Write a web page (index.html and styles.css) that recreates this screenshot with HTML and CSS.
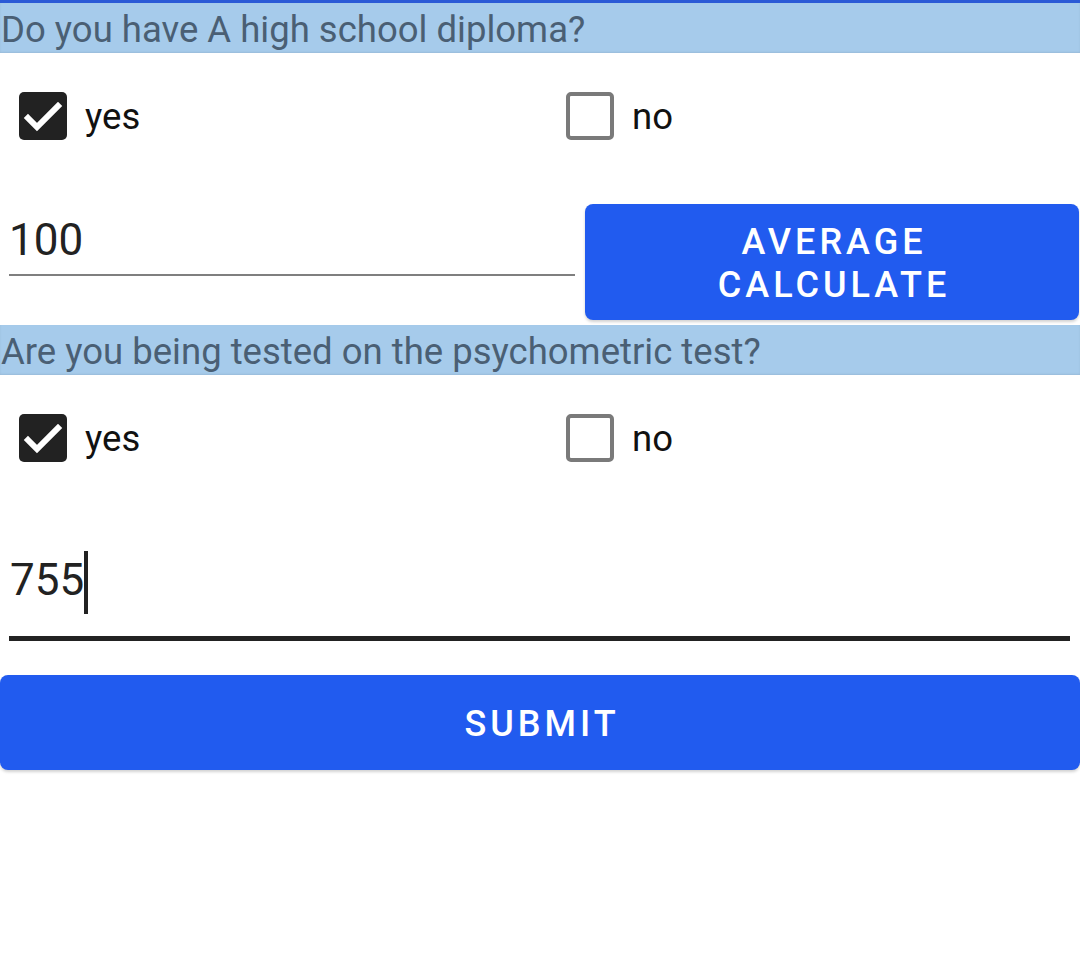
FILE: index.html
```html
<!DOCTYPE html>
<html>
<head>
<meta charset="utf-8">
<link rel="stylesheet" href="styles.css">
</head>
<body>
<div class="app">
  <div class="question">Do you have A high school diploma?</div>
  <div class="options">
    <label class="option">
      <span class="box checked"><svg viewBox="0 0 48 48" width="48" height="48"><path d="M9 26 L18 35 L39 14" fill="none" stroke="#fff" stroke-width="6" stroke-linecap="square"/></svg></span>
      <span class="label">yes</span>
    </label>
    <label class="option">
      <span class="box"></span>
      <span class="label">no</span>
    </label>
  </div>
  <div class="calc-row">
    <div class="field field-grey"><span class="value">100</span></div>
    <button class="btn btn-calc">AVERAGE<br>CALCULATE</button>
  </div>
  <div class="question">Are you being tested on the psychometric test?</div>
  <div class="options">
    <label class="option">
      <span class="box checked"><svg viewBox="0 0 48 48" width="48" height="48"><path d="M9 26 L18 35 L39 14" fill="none" stroke="#fff" stroke-width="6" stroke-linecap="square"/></svg></span>
      <span class="label">yes</span>
    </label>
    <label class="option">
      <span class="box"></span>
      <span class="label">no</span>
    </label>
  </div>
  <div class="field field-focus"><span class="value">755</span><span class="cursor"></span></div>
  <button class="btn btn-submit">SUBMIT</button>
</div>
</body>
</html>
```

FILE: styles.css
```css
* { box-sizing: border-box; }
html, body { margin: 0; padding: 0; background: #ffffff; }
body {
  font-family: Roboto, "Noto Sans", "Liberation Sans", sans-serif;
  width: 1080px;
  height: 957px;
  overflow: hidden;
}
.app {
  border-top: 3px solid #2b5ad6;
  display: flex;
  flex-direction: column;
}
.question {
  height: 50px;
  background: #a6cbeb;
  color: #4a5f74;
  font-size: 36.5px;
  line-height: 54px;
  padding-left: 1px;
  white-space: nowrap;
  overflow: hidden;
  box-shadow: 0 -1px 2px rgba(0,0,0,0.08) inset;
}
.options {
  height: 126px;
  display: grid;
  grid-template-columns: 547px 1fr;
  align-items: center;
}
.option {
  display: flex;
  align-items: center;
  padding-left: 19px;
  gap: 18px;
}
.box {
  width: 48px;
  height: 48px;
  border: 4.5px solid #7a7a7a;
  border-radius: 5px;
  display: flex;
  align-items: center;
  justify-content: center;
  flex: none;
}
.box.checked {
  background: #222222;
  border: none;
}
.label {
  font-size: 36.5px;
  color: #111111;
}
.calc-row {
  display: flex;
  align-items: flex-start;
  padding: 25px 0 5px 9px;
  gap: 10px;
}
.field {
  position: relative;
  display: flex;
  align-items: flex-end;
}
.field-grey {
  width: 566px;
  height: 72px;
  border-bottom: 2.5px solid #7f7f7f;
  padding: 0 0 10px 0;
}
.value {
  font-size: 44px;
  color: #222222;
  line-height: 48px;
}
.btn {
  border: none;
  background: #215bef;
  color: #ffffff;
  font-family: Roboto, "Noto Sans", "Liberation Sans", sans-serif;
  font-weight: 500;
  letter-spacing: 4px;
  border-radius: 8px;
  box-shadow: 0 2px 3px rgba(0,0,0,0.18);
}
.btn-calc {
  flex: 1;
  height: 116px;
  margin-right: 1px;
  font-size: 36px;
  line-height: 43px;
  padding: 4px 0 0 4px;
}
.field-focus {
  height: 140px;
  margin: 0 10px 0 9px;
  border-bottom: 5px solid #222222;
  padding: 0 0 32px 1px;
  align-items: flex-end;
}
.cursor {
  display: inline-block;
  width: 4px;
  height: 63px;
  background: #222222;
  margin-left: 0;
  margin-bottom: -10px;
}
.btn-submit {
  margin-top: 34px;
  height: 95px;
  width: 1080px;
  font-size: 36px;
  padding: 2px 0 0 4px;
}
```
